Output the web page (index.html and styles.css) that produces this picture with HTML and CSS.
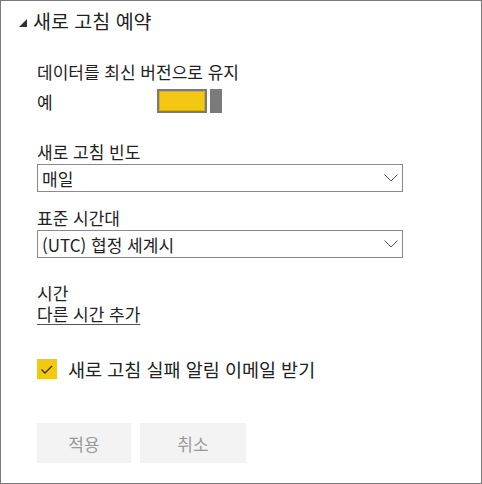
FILE: index.html
```html
<!DOCTYPE html>
<html lang="ko">
<head>
<meta charset="utf-8">
<link rel="stylesheet" href="styles.css">
</head>
<body>
<div class="panel">
  <div class="header">
    <span class="tri"></span>
    <h1 class="title">새로 고침 예약</h1>
  </div>
  <div class="label first">데이터를 최신 버전으로 유지</div>
  <div class="toggle-row">
    <span class="yes">예</span>
    <span class="toggle"><span class="track"></span><span class="thumb"></span></span>
  </div>
  <div class="label field-label l2">새로 고침 빈도</div>
  <div class="select"><span>매일</span>
    <svg class="chev" width="14" height="8" viewBox="0 0 14 8"><path d="M0.5 0.5 L7 7 L13.5 0.5" fill="none" stroke="#555" stroke-width="1"/></svg>
  </div>
  <div class="label field-label l3">표준 시간대</div>
  <div class="select"><span>(UTC) 협정 세계시</span>
    <svg class="chev" width="14" height="8" viewBox="0 0 14 8"><path d="M0.5 0.5 L7 7 L13.5 0.5" fill="none" stroke="#555" stroke-width="1"/></svg>
  </div>
  <div class="label time">시간</div>
  <div class="label link-line"><a class="link">다른 시간 추가</a></div>
  <div class="check-row">
    <span class="checkbox"><svg width="20" height="20" viewBox="0 0 20 20"><path d="M4.5 10.5 L8 14 L15 7" fill="none" stroke="#333" stroke-width="1.3"/></svg></span>
    <span class="check-label">새로 고침 실패 알림 이메일 받기</span>
  </div>
  <div class="buttons">
    <button class="btn apply">적용</button>
    <button class="btn cancel">취소</button>
  </div>
</div>
</body>
</html>
```
FILE: styles.css
```css
html, body {
  margin: 0;
  padding: 0;
  background: #fff;
}
.panel {
  box-sizing: border-box;
  width: 482px;
  height: 484px;
  border: 1px solid #7a7a7a;
  padding: 0 36px;
  font-family: "Noto Sans CJK KR", "Noto Sans", sans-serif;
  color: #222;
  font-size: 17px;
}
.header {
  display: flex;
  align-items: center;
  height: 40px;
  margin-left: -18px;
}
.tri {
  width: 0;
  height: 0;
  border-left: 8px solid transparent;
  border-bottom: 8px solid #333;
  margin-right: 6px;
  margin-top: 3px;
}
.title {
  margin: 0;
  font-size: 19.5px;
  font-weight: normal;
  line-height: 40px;
  color: #222;
}
.label {
  line-height: 20px;
  height: 20px;
}
.first {
  margin-top: 21px;
}
.toggle-row {
  display: flex;
  align-items: center;
  height: 24px;
  margin-top: 7px;
}
.yes {
  width: 120px;
}
.toggle {
  display: flex;
  height: 24px;
  gap: 3px;
}
.track {
  box-sizing: border-box;
  width: 50px;
  height: 24px;
  border: 2px solid #7a7a7a;
  background: #f2c811;
  box-shadow: inset 0 0 0 1px #d8b10e;
}
.thumb {
  width: 12px;
  height: 24px;
  background: #7a7a7a;
}
.field-label {
  margin-bottom: 2px;
}
.l2 {
  margin-top: 29px;
}
.l3 {
  margin-top: 16px;
}
.select {
  box-sizing: border-box;
  height: 28px;
  width: 366px;
  border: 1px solid #8a8a8a;
  display: flex;
  align-items: center;
  justify-content: space-between;
  padding: 0 4px 0 4px;
}
.time {
  margin-top: 25px;
}
.link-line {
  margin-top: 1px;
}
.link {
  color: #222;
  text-decoration: underline;
  text-decoration-color: #555;
  text-underline-offset: 3px;
}
.check-row {
  display: flex;
  align-items: center;
  height: 20px;
  margin-top: 35px;
}
.checkbox {
  width: 20px;
  height: 20px;
  background: #f2c811;
  display: flex;
}
.check-label {
  margin-left: 11px;
  font-size: 18.5px;
}
.buttons {
  display: flex;
  gap: 9px;
  margin-top: 44px;
}
.btn {
  height: 40px;
  border: none;
  background: #f3f3f3;
  color: #999;
  font-family: "Noto Sans CJK KR", "Noto Sans", sans-serif;
  font-size: 17px;
  padding: 0;
}
.apply {
  width: 94px;
}
.cancel {
  width: 106px;
}
```
